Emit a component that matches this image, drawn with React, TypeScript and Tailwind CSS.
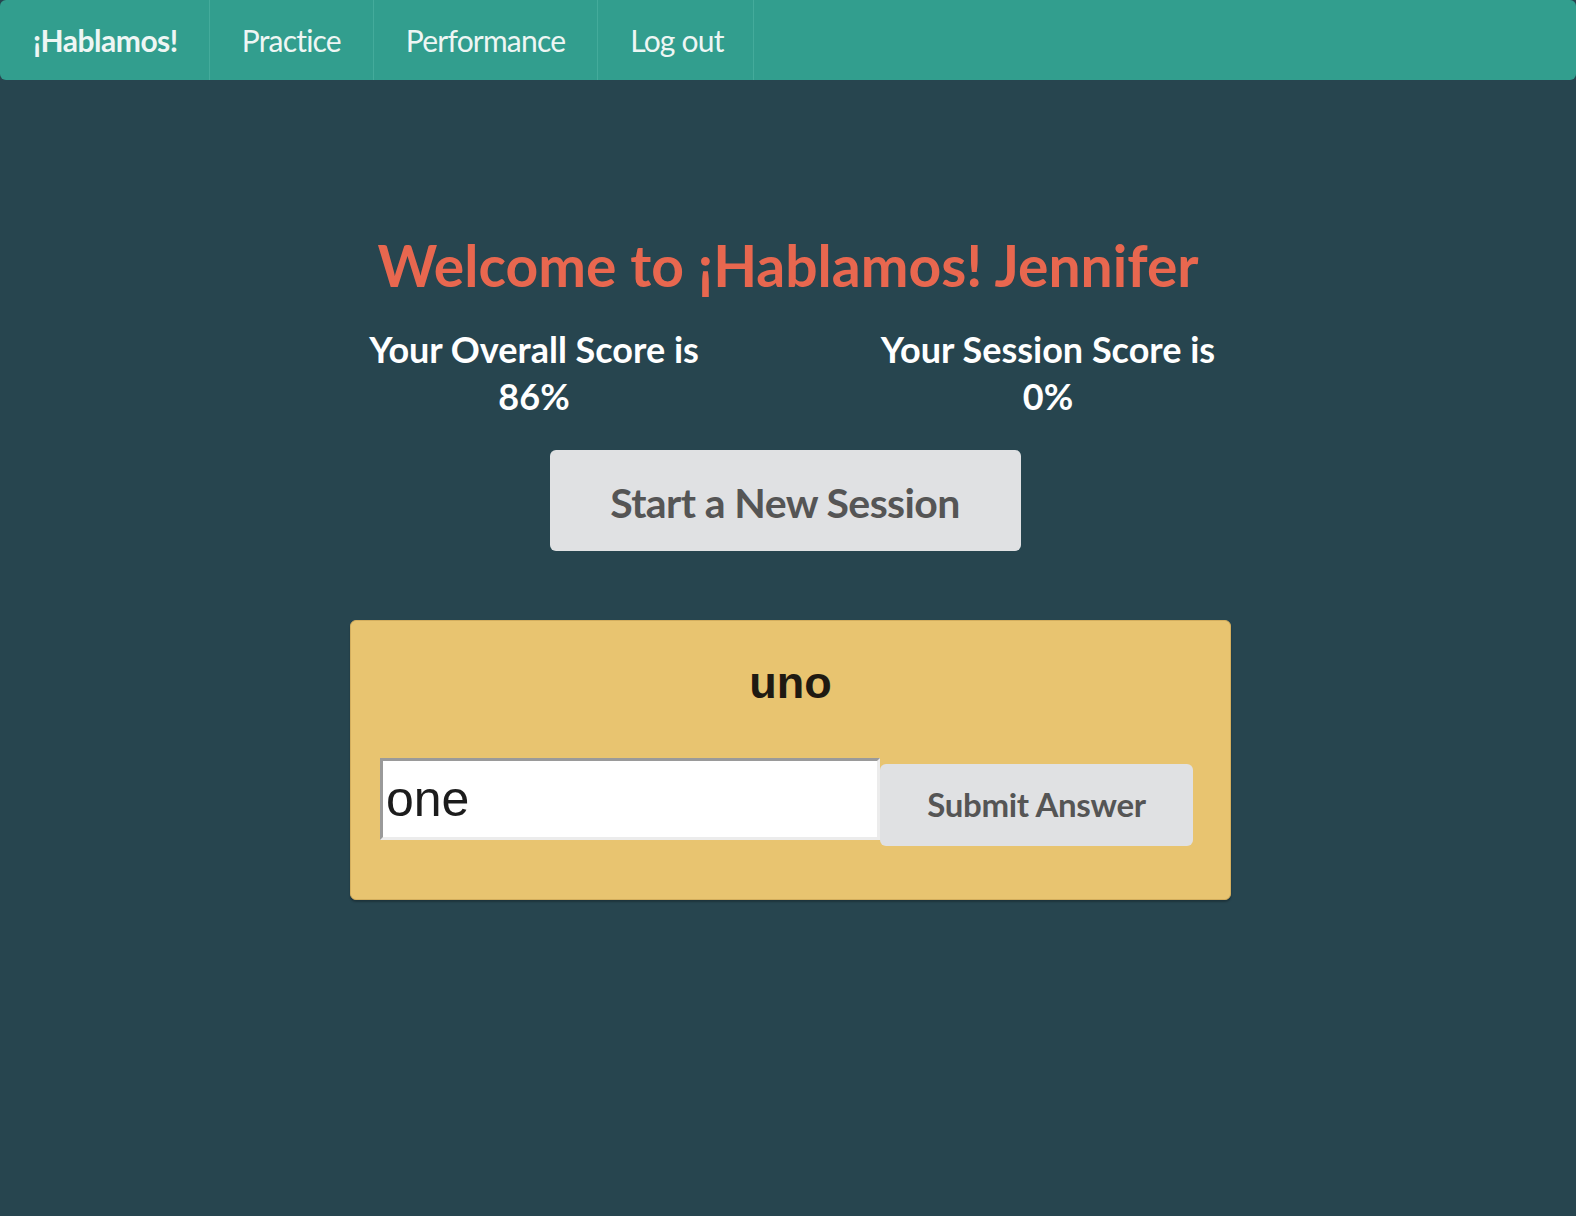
import { useState } from "react";

const navLinks = ["Practice", "Performance", "Log out"];

function NavBar() {
  return (
    <nav className="flex h-20 items-stretch rounded-md bg-[#329e8e] text-[#eef6f4]">
      <a className="flex items-center border-r border-[#44ab9b] pl-[33px] pr-[31px] text-[30px] font-bold tracking-[-0.5px]">
        ¡Hablamos!
      </a>
      {navLinks.map((link) => (
        <a
          key={link}
          className="flex items-center border-r border-[#44ab9b] px-[32px] text-[30px] tracking-[-0.8px] last:pr-[29px]"
        >
          {link}
        </a>
      ))}
    </nav>
  );
}

function ScoreBlock(props: { label: string; value: number }) {
  return (
    <div className="w-[514px] text-center text-[36px] font-bold leading-[47px] text-white">
      <div>{props.label}</div>
      <div>{props.value}%</div>
    </div>
  );
}

function PracticeCard() {
  const [answer, setAnswer] = useState("one");

  return (
    <div className="ml-[5px] mt-[69px] h-[280px] w-[881px] rounded-md border border-[#d3ae5e] bg-[#e8c470] shadow-[0_2px_2px_rgba(0,0,0,0.25)]">
      <h2 className="mt-[34px] text-center font-['Liberation_Sans',Arial,sans-serif] text-[45px] font-bold leading-[56px] text-[#1f1a12]">
        uno
      </h2>
      <div className="mt-[47px] flex items-start pl-[29px]">
        <input
          value={answer}
          onChange={(e) => setAnswer(e.target.value)}
          className="h-[82px] w-[500px] border-[3px] border-b-[#ececec] border-l-[#9a9a9a] border-r-[#ececec] border-t-[#9a9a9a] bg-white pl-[3px] pr-[2px] font-['Liberation_Sans',Arial,sans-serif] text-[50px] text-[#1c1c1c] outline-none"
        />
        <button className="mt-[6px] h-[82px] w-[313px] rounded-md bg-[#e0e1e3] text-[33px] font-bold tracking-[-0.3px] text-[#555555]">
          Submit Answer
        </button>
      </div>
    </div>
  );
}

export default function App() {
  return (
    <div className="min-h-[1216px] bg-[#27454f] font-['Lato','Open_Sans',sans-serif]">
      <NavBar />

      <main className="flex flex-col items-center">
        <h1 className="mt-[154px] text-[57px] font-bold leading-[62px] text-[#e8674f]">
          Welcome to ¡Hablamos! Jennifer
        </h1>

        <div className="ml-[6px] mt-[30px] flex">
          <ScoreBlock label="Your Overall Score is" value={86} />
          <ScoreBlock label="Your Session Score is" value={0} />
        </div>

        <button className="ml-[-6px] mt-[30px] h-[101px] w-[471px] rounded-md bg-[#e0e1e3] pt-[5px] text-[41px] font-bold tracking-[-0.6px] text-[#555555]">
          Start a New Session
        </button>

        <PracticeCard />
      </main>
    </div>
  );
}
